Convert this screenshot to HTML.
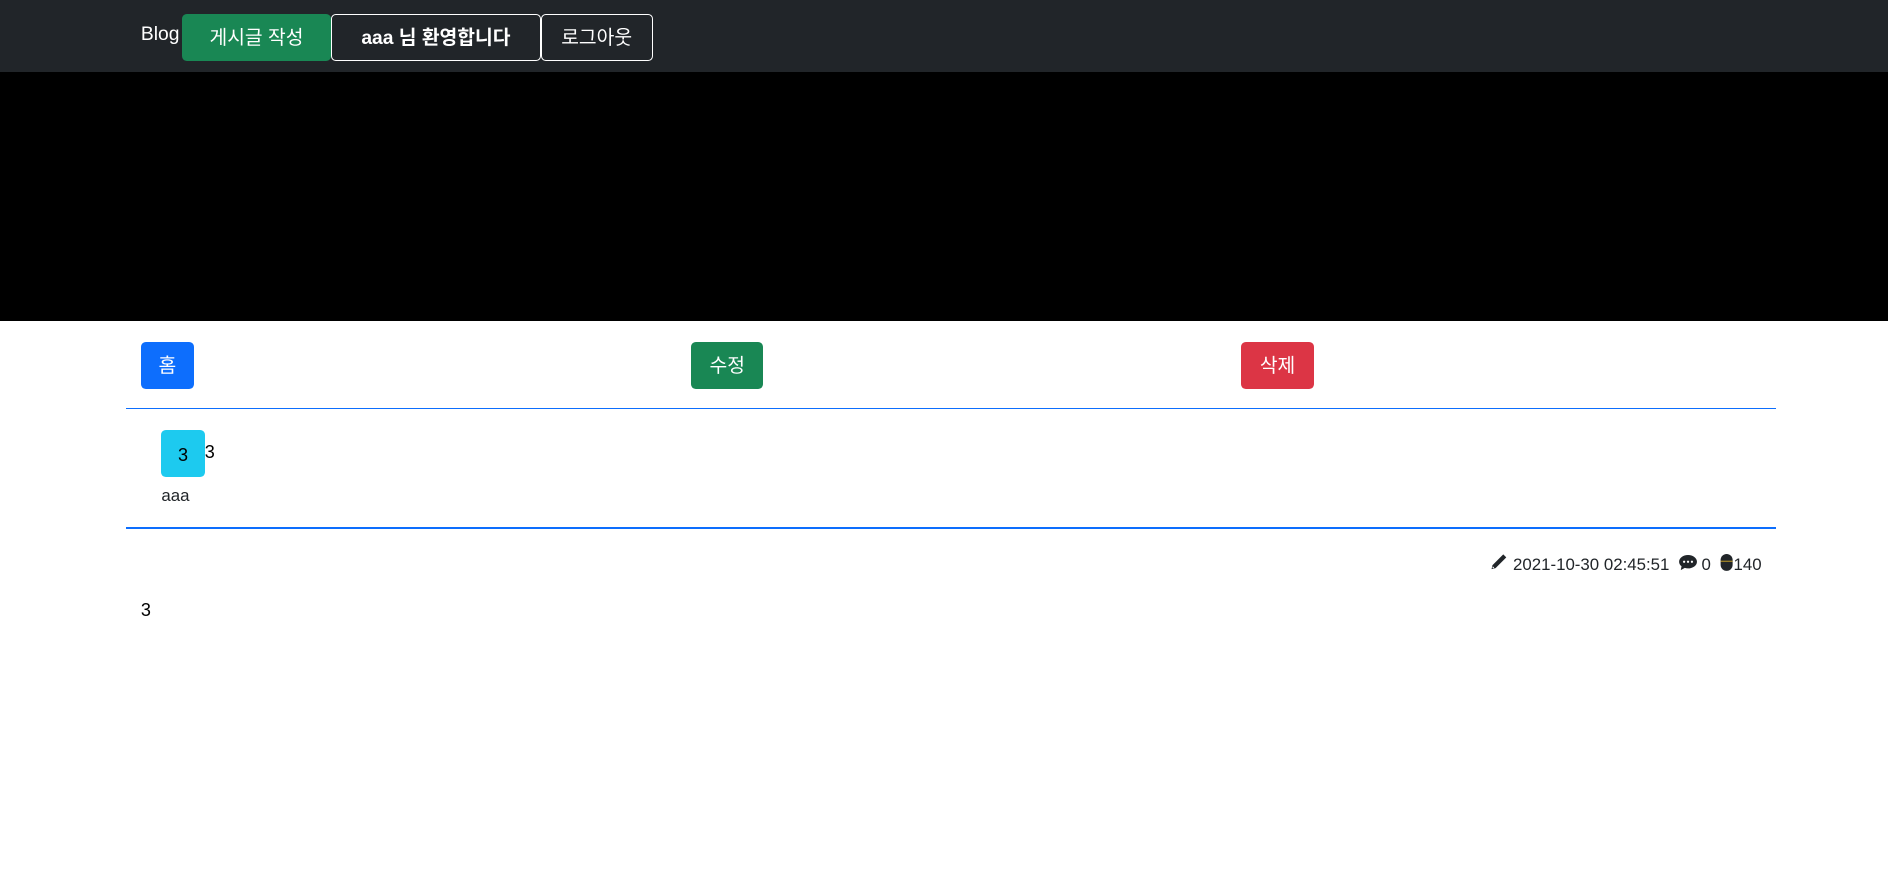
<!DOCTYPE html>
<html><head><meta charset="utf-8"><style>
html{zoom:1.2041}
*{box-sizing:border-box}
body{margin:0;width:1568px;height:724px;overflow:hidden;background:#fff;font-family:"Liberation Sans","Noto Sans CJK KR",sans-serif;font-size:16px;color:#212529}
.nav{height:60px;background:#212529;position:relative}
.blog{position:absolute;left:117px;top:20px;color:#fff;font-size:16px}
.nb{position:absolute;top:12px;height:39px;line-height:40px;border:1px solid #fff;border-radius:4px;color:#fff;font-size:16px;text-align:center}
.banner{height:207px;background:#000}
.btn{position:absolute;top:284px;height:39px;line-height:41px;border-radius:4px;color:#fff;font-size:16px;text-align:center}
.line{position:absolute;left:105px;width:1370px;height:1px;background:#0d6efd}
.t{position:absolute;font-size:14px}
</style></head><body>
<div class="nav">
<div class="blog">Blog</div>
<div class="nb" style="left:151px;width:124px;background:#198754;border-color:#198754">게시글 작성</div>
<div class="nb" style="left:275px;width:174px;font-weight:bold">aaa 님 환영합니다</div>
<div class="nb" style="left:449px;width:93px">로그아웃</div>
</div>
<div class="banner"></div>
<div class="btn" style="left:117px;width:44px;background:#0d6efd">홈</div>
<div class="btn" style="left:574px;width:60px;background:#198754">수정</div>
<div class="btn" style="left:1031px;width:60px;background:#dc3545">삭제</div>
<div class="line" style="top:339px"></div>
<div style="position:absolute;left:134px;top:357px;width:36px;height:39px;background:#1dcaef;border-radius:4px;text-align:center;line-height:43px;font-size:15px;color:#000">3</div>
<div class="t" style="left:170px;top:367px;font-size:15px;color:#000">3</div>
<div class="t" style="left:134px;top:404px">aaa</div>
<div class="line" style="top:438px"></div>
<div class="t" style="right:105px;top:459px;color:#212529">
<svg width="16" height="15" viewBox="0 0 16 16" style="vertical-align:-1px"><path d="M12.1 1.2l2.7 2.7-9.5 9.5-3.6.9.9-3.6z" fill="#212529"/><path d="M2.7 12.3l1 1" stroke="#fff"/></svg> 2021-10-30 02:45:51 &nbsp;<svg width="15" height="13" viewBox="0 0 16 14" style="vertical-align:-1px"><path d="M8 0C3.6 0 0 2.7 0 6c0 1.6.8 3 2.2 4.1L1.5 13.5l3.6-2C6 11.8 7 12 8 12c4.4 0 8-2.7 8-6S12.4 0 8 0z" fill="#212529"/><circle cx="4.5" cy="6" r="1" fill="#fff"/><circle cx="8" cy="6" r="1" fill="#fff"/><circle cx="11.5" cy="6" r="1" fill="#fff"/></svg> 0 &nbsp;<svg width="11" height="14" viewBox="0 0 10 14" style="vertical-align:-1px"><rect x="0" y="0" width="10" height="14" rx="5" fill="#212529"/><path d="M0 6h10" stroke="#c9a227" stroke-width=".8"/></svg>140</div>
<div class="t" style="left:117px;top:498px;font-size:15px;color:#000">3</div>
</body></html>
